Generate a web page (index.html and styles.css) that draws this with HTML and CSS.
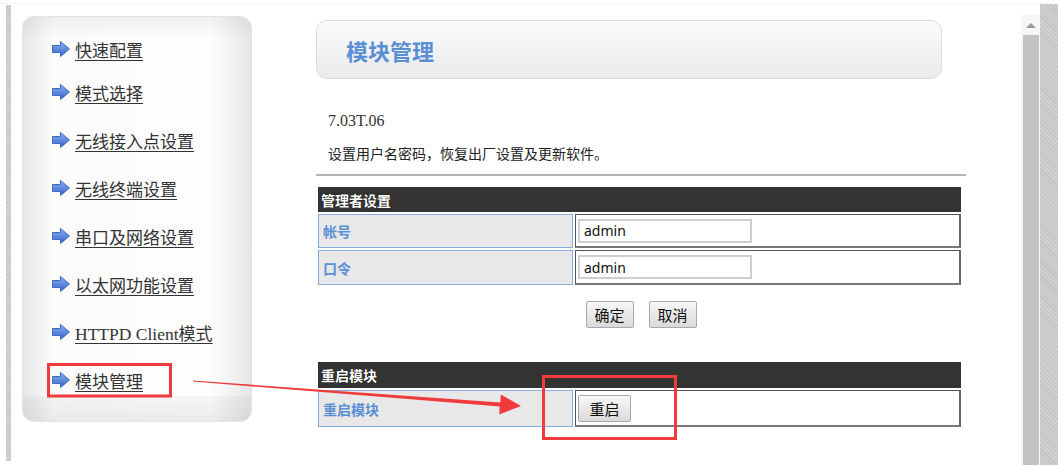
FILE: index.html
```html
<!DOCTYPE html>
<html lang="zh-CN">
<head>
<meta charset="utf-8">
<title>模块管理</title>
<link rel="stylesheet" href="styles.css">
</head>
<body>
<div class="frame">
  <div class="lstrip"></div>
  <aside class="sidebar">
    <ul class="nav">
      <li><a href="#"><svg class="ico" viewBox="0 0 18 16"><defs><linearGradient id="g1" x1="0" y1="0" x2="0" y2="1"><stop offset="0" stop-color="#8fb6f0"/><stop offset="1" stop-color="#2f62c6"/></linearGradient></defs><polygon points="0.5,4.5 8.5,4.5 8.5,0.5 17.5,8 8.5,15.5 8.5,11.5 0.5,11.5" fill="url(#g1)" stroke="#3f6cc0" stroke-width="1"/></svg><span>快速配置</span></a></li>
      <li><a href="#"><svg class="ico" viewBox="0 0 18 16"><polygon points="0.5,4.5 8.5,4.5 8.5,0.5 17.5,8 8.5,15.5 8.5,11.5 0.5,11.5" fill="url(#g1)" stroke="#3f6cc0" stroke-width="1"/></svg><span>模式选择</span></a></li>
      <li><a href="#"><svg class="ico" viewBox="0 0 18 16"><polygon points="0.5,4.5 8.5,4.5 8.5,0.5 17.5,8 8.5,15.5 8.5,11.5 0.5,11.5" fill="url(#g1)" stroke="#3f6cc0" stroke-width="1"/></svg><span>无线接入点设置</span></a></li>
      <li><a href="#"><svg class="ico" viewBox="0 0 18 16"><polygon points="0.5,4.5 8.5,4.5 8.5,0.5 17.5,8 8.5,15.5 8.5,11.5 0.5,11.5" fill="url(#g1)" stroke="#3f6cc0" stroke-width="1"/></svg><span>无线终端设置</span></a></li>
      <li><a href="#"><svg class="ico" viewBox="0 0 18 16"><polygon points="0.5,4.5 8.5,4.5 8.5,0.5 17.5,8 8.5,15.5 8.5,11.5 0.5,11.5" fill="url(#g1)" stroke="#3f6cc0" stroke-width="1"/></svg><span>串口及网络设置</span></a></li>
      <li><a href="#"><svg class="ico" viewBox="0 0 18 16"><polygon points="0.5,4.5 8.5,4.5 8.5,0.5 17.5,8 8.5,15.5 8.5,11.5 0.5,11.5" fill="url(#g1)" stroke="#3f6cc0" stroke-width="1"/></svg><span>以太网功能设置</span></a></li>
      <li><a href="#"><svg class="ico" viewBox="0 0 18 16"><polygon points="0.5,4.5 8.5,4.5 8.5,0.5 17.5,8 8.5,15.5 8.5,11.5 0.5,11.5" fill="url(#g1)" stroke="#3f6cc0" stroke-width="1"/></svg><span><span class="latin">HTTPD Client</span>模式</span></a></li>
      <li><a href="#"><svg class="ico" viewBox="0 0 18 16"><polygon points="0.5,4.5 8.5,4.5 8.5,0.5 17.5,8 8.5,15.5 8.5,11.5 0.5,11.5" fill="url(#g1)" stroke="#3f6cc0" stroke-width="1"/></svg><span>模块管理</span></a></li>
    </ul>
  </aside>
  <main class="main">
    <div class="titlebox"><h1>模块管理</h1></div>
    <p class="ver">7.03T.06</p>
    <p class="desc">设置用户名密码，恢复出厂设置及更新软件。</p>
    <div class="rule"></div>
    <table class="tbl t1">
      <colgroup><col class="c1"><col class="c2"></colgroup>
      <tr class="hd"><th colspan="2">管理者设置</th></tr>
      <tr class="r1"><td class="lbl">帐号</td><td class="val"><input class="inp" type="text" value="admin"></td></tr>
      <tr class="r2"><td class="lbl">口令</td><td class="val"><input class="inp" type="text" value="admin"></td></tr>
    </table>
    <div class="btns"><button class="btn">确定</button><button class="btn">取消</button></div>
    <table class="tbl t2">
      <colgroup><col class="c1"><col class="c2"></colgroup>
      <tr class="hd2"><th colspan="2">重启模块</th></tr>
      <tr class="r3"><td class="lbl">重启模块</td><td class="val"><button class="btn btn-rs">重启</button></td></tr>
    </table>
  </main>
  <div class="scroll">
    <div class="sarrow"></div>
    <div class="thumb"></div>
  </div>
  <div class="rstrip"></div>
</div>
<svg class="annot" width="1058" height="465" viewBox="0 0 1058 465">
  <rect x="48.5" y="364.5" width="122" height="31.5" fill="none" stroke="#ef3b3b" stroke-width="3"/>
  <rect x="543.5" y="376.5" width="132" height="62" fill="none" stroke="#ef3b3b" stroke-width="3"/>
  <polygon points="193,380.6 500.3,402.6 500.8,394.5 521,406 499.2,414.5 499.7,406.6 193,381.6" fill="#ef3b3b"/>
</svg>
</body>
</html>
```
FILE: styles.css
```css
html, body {
  margin: 0;
  padding: 0;
  background: #ffffff;
}
body {
  width: 1058px;
  height: 465px;
  overflow: hidden;
  position: relative;
  font-family: "Noto Sans CJK SC", "Noto Sans", sans-serif;
  color: #333;
}
.frame {
  display: flex;
  align-items: flex-start;
  height: 465px;
  border-top: 1px dashed #f0f0f0;
  margin-top: 3px;
  box-sizing: border-box;
}
.lstrip {
  margin-left: 6px;
  margin-top: 1px;
  width: 5px;
  height: 456px;
  background: repeating-linear-gradient(45deg, #c4c4c4 0 1px, #d2d2d2 1px 3px);
}
.sidebar {
  margin-left: 11px;
  margin-top: 12px;
  width: 230px;
  height: 406px;
  box-sizing: border-box;
  border: 1px solid #e3e3e3;
  border-radius: 12px;
  padding-top: 13px;
  background:
    linear-gradient(to bottom, rgba(0,0,0,0.05) 0, rgba(0,0,0,0) 22px, rgba(0,0,0,0) calc(100% - 25px), rgba(0,0,0,0.03) calc(100% - 25px), rgba(0,0,0,0.07) 100%),
    linear-gradient(to right, #e6e6e6 0, #fbfbfb 30px, #fdfdfd calc(100% - 40px), #e6e6e6 100%);
}
.nav {
  list-style: none;
  margin: 0;
  padding: 0 0 0 29px;
}
.nav li {
  height: 48px;
  display: flex;
  align-items: center;
}
.nav li:first-child {
  height: 38px;
}
.nav a {
  display: flex;
  align-items: center;
  color: #333;
  text-decoration: none;
  font-size: 17px;
}
.nav a span {
  text-decoration: underline;
  text-underline-offset: 3px;
  text-decoration-thickness: 1px;
}
.nav .latin {
  font-family: "Liberation Serif", serif;
  font-size: 17.5px;
}
.ico {
  width: 18px;
  height: 16px;
  margin-right: 5px;
  flex: none;
}
.main {
  margin-left: 64px;
  margin-top: 16px;
  width: 650px;
}
.titlebox {
  width: 626px;
  height: 59px;
  box-sizing: border-box;
  border: 1px solid #dcdcdc;
  border-radius: 11px;
  background: linear-gradient(to bottom, #fbfbfb 0, #f1f1f1 60%, #ebebeb 100%);
  display: flex;
  align-items: center;
  padding-left: 29px;
}
.titlebox h1 {
  margin: 0;
  font-size: 22px;
  font-weight: bold;
  color: #5b8fd4;
  line-height: 1;
}
.ver {
  margin: 32px 0 0 12px;
  height: 20px;
  line-height: 20px;
  font-family: "Liberation Serif", serif;
  font-size: 16px;
  color: #333;
}
.desc {
  margin: 12px 0 0 12px;
  height: 20px;
  line-height: 20px;
  font-size: 14px;
  color: #222;
}
.rule {
  margin-top: 11px;
  width: 650px;
  border-top: 2px solid #b4b4b4;
}
.tbl {
  border-collapse: separate;
  border-spacing: 2px;
  width: 647px;
  table-layout: fixed;
}
.c1 { width: 255px; }
.c2 { width: auto; }
.t1 {
  margin-top: 9px;
}
.tbl th {
  background: #333333;
  color: #fff;
  text-align: left;
  font-size: 14px;
  font-weight: bold;
  padding: 0 3px;
  text-shadow: 0 0 1px #000;
}
.hd { height: 25px; }
.hd2 { height: 26px; }
.r1 { height: 34px; }
.r2 { height: 35px; }
.r3 { height: 37px; }
.lbl {
  padding: 0 4px;
  background: #e8e8e8;
  border: 1px solid #86ade0;
  color: #5b8fd4;
  font-weight: bold;
  font-size: 14px;
}
.val {
  padding: 0 0 0 2px;
  border: 1px solid #555;
  border-right-width: 2px;
  border-bottom-width: 2px;
  border-right-color: #666;
  border-bottom-color: #777;
  background: #fff;
}
.inp {
  display: block;
  width: 174px;
  height: 24px;
  box-sizing: border-box;
  border: 2px solid #cfcfcf;
  padding: 0 4px;
  font-family: "Noto Sans", sans-serif;
  font-size: 14px;
  color: #111;
}
.btns {
  display: flex;
  justify-content: center;
  gap: 15px;
  width: 647px;
  padding-left: 3px;
  box-sizing: border-box;
  margin-top: 14px;
}
.btn {
  height: 27px;
  min-width: 48px;
  padding: 0 7px;
  box-sizing: border-box;
  border: 1px solid #a9a9a9;
  border-radius: 2px;
  background: linear-gradient(to bottom, #f8f8f8 0, #e8e8e8 50%, #dadada 100%);
  font-family: "Noto Sans CJK SC", sans-serif;
  font-size: 15px;
  color: #111;
  line-height: 1;
}
.btn-rs {
  display: block;
  width: 53px;
}
.t2 {
  margin-top: 32px;
}
.scroll {
  margin-left: 55px;
  margin-top: 11px;
  width: 19px;
  height: 452px;
  background: #f6f6f6;
  display: flex;
  flex-direction: column;
  align-items: center;
}
.sarrow {
  margin-top: 8px;
  width: 0;
  height: 0;
  border-left: 5px solid transparent;
  border-right: 5px solid transparent;
  border-bottom: 5px solid #9a9a9a;
}
.thumb {
  margin-top: 7px;
  width: 16px;
  flex: 1;
  background: #c3c3c3;
}
.rstrip {
  width: 18px;
  height: 462px;
  background: repeating-linear-gradient(45deg, #c2c2c2 0 1px, #cfcfcf 1px 3px);
}
.annot {
  position: absolute;
  left: 0;
  top: 0;
  pointer-events: none;
}
```
